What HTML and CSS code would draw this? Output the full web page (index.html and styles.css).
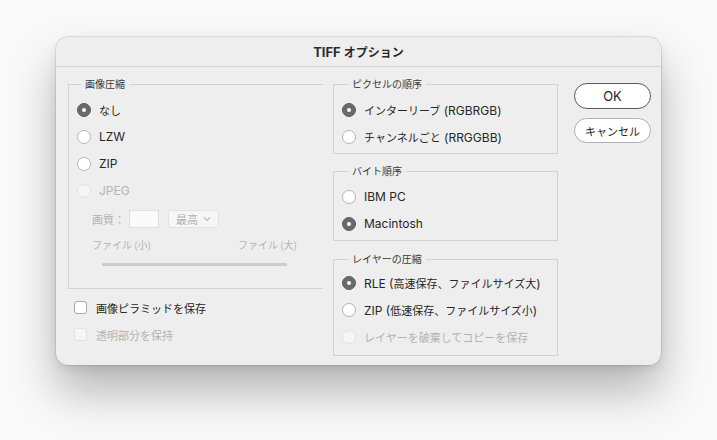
FILE: index.html
```html
<!DOCTYPE html>
<html lang="ja">
<head>
<meta charset="utf-8">
<title>TIFF オプション</title>
<link rel="stylesheet" href="styles.css">
</head>
<body>
<div class="stage">
  <div class="window">
    <div class="titlebar">TIFF <span class="ja">オプション</span></div>
    <div class="content">
      <div class="col-left">
        <fieldset class="group group-left">
          <legend>画像圧縮</legend>
          <div class="rows">
            <div class="opt"><span class="radio on"></span><span class="lbl ja">なし</span></div>
            <div class="opt"><span class="radio"></span><span class="lbl">LZW</span></div>
            <div class="opt"><span class="radio"></span><span class="lbl">ZIP</span></div>
            <div class="opt disabled"><span class="radio"></span><span class="lbl">JPEG</span></div>
          </div>
          <div class="quality">
            <span class="q-label">画質：</span>
            <span class="q-input"></span>
            <span class="q-select"><span>最高</span><svg width="8" height="6" viewBox="0 0 8 6"><path d="M1 1.5 L4 4.5 L7 1.5" fill="none" stroke="#b8b8b8" stroke-width="1.1"/></svg></span>
          </div>
          <div class="file-labels"><span>ファイル (小)</span><span>ファイル (大)</span></div>
          <div class="slider"></div>
        </fieldset>
        <div class="checks">
          <div class="opt chk"><span class="checkbox"></span><span class="lbl ja">画像ピラミッドを保存</span></div>
          <div class="opt chk disabled"><span class="checkbox"></span><span class="lbl ja">透明部分を保持</span></div>
        </div>
      </div>
      <div class="col-right">
        <fieldset class="group g1">
          <legend>ピクセルの順序</legend>
          <div class="opt"><span class="radio on"></span><span class="lbl"><span class="ja">インターリーブ</span> (RGBRGB)</span></div>
          <div class="opt"><span class="radio"></span><span class="lbl"><span class="ja">チャンネルごと</span> (RRGGBB)</span></div>
        </fieldset>
        <fieldset class="group g2">
          <legend>バイト順序</legend>
          <div class="opt"><span class="radio"></span><span class="lbl">IBM PC</span></div>
          <div class="opt"><span class="radio on"></span><span class="lbl">Macintosh</span></div>
        </fieldset>
        <fieldset class="group g3">
          <legend>レイヤーの圧縮</legend>
          <div class="opt"><span class="radio on"></span><span class="lbl">RLE (<span class="ja">高速保存、ファイルサイズ大</span>)</span></div>
          <div class="opt"><span class="radio"></span><span class="lbl">ZIP (<span class="ja">低速保存、ファイルサイズ小</span>)</span></div>
          <div class="opt disabled"><span class="radio"></span><span class="lbl ja">レイヤーを破棄してコピーを保存</span></div>
        </fieldset>
      </div>
      <div class="col-buttons">
        <button class="btn btn-ok">OK</button>
        <button class="btn btn-cancel ja">キャンセル</button>
      </div>
    </div>
  </div>
</div>
</body>
</html>
```
FILE: styles.css
```css
html, body {
  margin: 0;
  padding: 0;
}
body {
  background: #f9f9f9;
  width: 717px;
  height: 440px;
  overflow: hidden;
  font-family: "Inter", "Noto Sans CJK JP", sans-serif;
  font-size: 12px;
  color: #262626;
}
.ja {
  font-family: "Noto Sans CJK JP", sans-serif;
  font-size: 11px;
}
.stage {
  padding: 37px 0 0 56px;
}
.window {
  width: 605px;
  height: 328px;
  background: #eeeeee;
  border-radius: 12px;
  box-shadow: 0 0 0 0.5px rgba(0,0,0,0.18), 0 26px 46px rgba(0,0,0,0.28), 0 4px 10px rgba(0,0,0,0.08);
  overflow: hidden;
}
.titlebar {
  height: 29px;
  line-height: 29px;
  text-align: center;
  font-weight: bold;
  font-size: 13px;
  color: #2b2b2b;
  border-bottom: 1px solid #d4d4d4;
}
.titlebar .ja {
  font-size: 12px;
  font-weight: bold;
}
.content {
  display: flex;
  align-items: flex-start;
  padding: 10px 0 0 12px;
}
.col-left {
  width: 255px;
}
.col-right {
  width: 225px;
  margin-left: 10px;
}
.col-buttons {
  width: 77px;
  margin-left: 16px;
  margin-top: 6px;
  display: flex;
  flex-direction: column;
  gap: 9px;
}
.group {
  margin: 0;
  padding: 0;
  border: 1px solid #d2d2d2;
  min-width: 0;
}
.group legend {
  font-family: "Noto Sans CJK JP", sans-serif;
  font-size: 10px;
  line-height: 14px;
  color: #3a3a3a;
  padding: 0 4px;
  margin-left: 14px;
}
.group-left {
  border-right: none;
  padding: 5px 0 22px;
}
.group-left legend {
  margin-left: 12px;
}
.g1 { padding: 5px 0 3px; }
.g2 { padding: 5px 0 3px; margin-top: 10px; }
.g3 { padding: 3px 0 5px; margin-top: 11px; }

.opt {
  display: flex;
  align-items: center;
  height: 27px;
  padding-left: 8px;
}
.opt .lbl {
  margin-left: 8px;
  white-space: nowrap;
}
.radio {
  width: 14px;
  height: 14px;
  box-sizing: border-box;
  border-radius: 50%;
  border: 1px solid #b4b4b4;
  background: #ffffff;
  flex: none;
  position: relative;
}
.radio.on {
  background: #6a6a6a;
  border-color: #5e5e5e;
}
.radio.on::after {
  content: "";
  position: absolute;
  left: 4px;
  top: 4px;
  width: 4px;
  height: 4px;
  border-radius: 50%;
  background: #ffffff;
}
.disabled .radio {
  border-color: #e2e2e2;
  background: #f6f6f6;
}
.disabled .lbl {
  color: #b3b3b3;
}
.quality {
  display: flex;
  align-items: center;
  margin-top: 6px;
  padding-left: 23px;
  height: 18px;
  color: #b3b3b3;
  font-family: "Noto Sans CJK JP", sans-serif;
  font-size: 11px;
}
.q-label {
  width: 37px;
}
.q-input {
  width: 30px;
  height: 18px;
  box-sizing: border-box;
  background: #fafafa;
  border: 1px solid #e0e0e0;
}
.q-select {
  margin-left: 9px;
  width: 51px;
  height: 18px;
  box-sizing: border-box;
  border: 1px solid #e2e2e2;
  border-radius: 3px;
  background: #f6f6f6;
  display: flex;
  align-items: center;
  justify-content: space-between;
  padding: 0 7px 0 7px;
  font-size: 11px;
}
.file-labels {
  display: flex;
  justify-content: space-between;
  width: 205px;
  margin-left: 23px;
  margin-top: 10px;
  height: 14px;
  line-height: 14px;
  font-family: "Noto Sans CJK JP", sans-serif;
  font-size: 10px;
  color: #b3b3b3;
}
.slider {
  margin: 11px 0 0 33px;
  width: 185px;
  height: 3px;
  border-radius: 2px;
  background: #cbcbcb;
}
.checks {
  margin-top: 5px;
}
.chk {
  padding-left: 6px;
}
.chk .lbl {
  margin-left: 9px;
}
.checkbox {
  width: 13px;
  height: 13px;
  box-sizing: border-box;
  border: 1px solid #a9a9a9;
  border-radius: 3px;
  background: #ffffff;
  flex: none;
}
.disabled .checkbox {
  border-color: #e2e2e2;
  background: #f6f6f6;
}
.btn {
  font-family: "Inter", "Noto Sans CJK JP", sans-serif;
  width: 77px;
  background: #ffffff;
  border-radius: 13px;
  padding: 0;
  margin: 0;
  color: #262626;
  box-sizing: border-box;
}
.btn-ok {
  height: 26px;
  border: 1px solid #5a5a5a;
  font-size: 13px;
}
.btn-cancel {
  height: 25px;
  border: 1px solid #b0b0b0;
  font-family: "Noto Sans CJK JP", sans-serif;
  font-size: 11px;
}
```
